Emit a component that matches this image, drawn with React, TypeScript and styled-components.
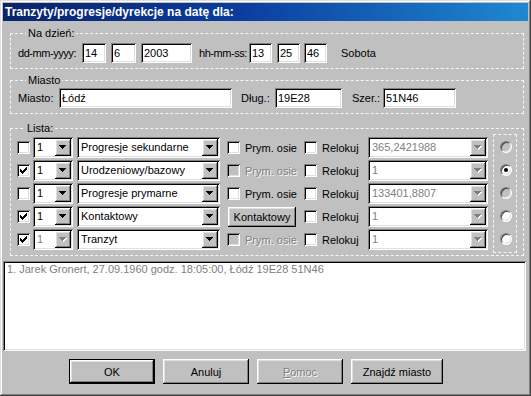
import React from "react"
import styled, { createGlobalStyle, css } from "styled-components"

const GlobalStyle = createGlobalStyle`
  html, body {
    margin: 0;
    padding: 0;
    background: #c0c0c0;
  }
  body {
    font-family: "Liberation Sans", Arial, sans-serif;
    font-size: 11px;
  }
`

const sunken = css`
  box-shadow: inset 1px 1px #808080, inset -1px -1px #ffffff,
    inset 2px 2px #000000, inset -2px -2px #dfdfdf;
`

const raised = css`
  box-shadow: inset -1px -1px #000000, inset 1px 1px #ffffff,
    inset -2px -2px #808080, inset 2px 2px #dfdfdf;
`

const disabledText = css`
  color: #808080;
  text-shadow: 1px 1px 0 #ffffff;
`

const Window = styled.div`
  box-sizing: border-box;
  width: 531px;
  height: 396px;
  padding: 3px;
  background: #c0c0c0;
  box-shadow: inset -1px -1px #404040, inset 1px 1px #dfdfdf,
    inset -2px -2px #808080, inset 2px 2px #ffffff;
  display: flex;
  flex-direction: column;
  overflow: hidden;
  color: #000;
`

const TitleBar = styled.div`
  height: 18px;
  flex-shrink: 0;
  padding-left: 2px;
  display: flex;
  align-items: center;
  background: linear-gradient(90deg, #0a246a 0%, #0b3d9e 45%, #1f88d2 100%);
  color: #fff;
  font-weight: bold;
  font-size: 12px;
  white-space: nowrap;
`

const Group = styled.fieldset<{ $top: number; $pt: number; $pb: number; $pl: number }>`
  margin: ${(p) => p.$top}px 4px 0 7px;
  padding: ${(p) => p.$pt}px 5px ${(p) => p.$pb}px ${(p) => p.$pl}px;
  border: 1px dashed #f6f6f6;
  min-width: 0;
`

const Caption = styled.legend`
  margin-left: 8px;
  padding: 0 2px;
  line-height: 12px;
  font-size: 11px;
`

const FieldRow = styled.div`
  display: flex;
  align-items: center;
  white-space: nowrap;
`

const Label = styled.span<{ $w?: number; $ml?: number; $disabled?: boolean; $tight?: boolean }>`
  display: inline-block;
  flex-shrink: 0;
  width: ${(p) => (p.$w ? `${p.$w}px` : "auto")};
  margin-left: ${(p) => p.$ml ?? 0}px;
  white-space: nowrap;
  letter-spacing: ${(p) => (p.$tight ? "-0.45px" : "normal")};
  ${(p) => p.$disabled && disabledText}
`

const TextBox = styled.div<{ $w: number; $ml?: number; $h?: number }>`
  box-sizing: border-box;
  flex-shrink: 0;
  width: ${(p) => p.$w}px;
  height: ${(p) => p.$h ?? 20}px;
  margin-left: ${(p) => p.$ml ?? 0}px;
  padding: 3px 3px 0;
  background: #fff;
  ${sunken}
  line-height: 14px;
  overflow: hidden;
`

const ComboBox = styled.div<{ $w: number }>`
  box-sizing: border-box;
  width: ${(p) => p.$w}px;
  height: 21px;
  padding: 2px;
  display: flex;
  background: #fff;
  ${sunken}
`

const ComboText = styled.span<{ $muted?: boolean }>`
  flex: 1;
  padding-left: 2px;
  line-height: 17px;
  overflow: hidden;
  white-space: nowrap;
  color: ${(p) => (p.$muted ? "#808080" : "#000")};
`

const DropButton = styled.span`
  width: 16px;
  height: 17px;
  display: flex;
  align-items: center;
  justify-content: center;
  background: #c0c0c0;
  ${raised}
`

const CheckFrame = styled.span<{ $disabled?: boolean }>`
  box-sizing: border-box;
  display: inline-flex;
  align-items: center;
  justify-content: center;
  width: 13px;
  height: 13px;
  flex-shrink: 0;
  background: ${(p) => (p.$disabled ? "#c0c0c0" : "#fff")};
  ${sunken}
`

const Cell = styled.div`
  display: flex;
  align-items: center;
`

const ListRow = styled.div`
  display: grid;
  grid-template-columns: 16px 44px 150px 77px 64px 120px;
  align-items: center;
  height: 21px;
`

const Rows = styled.div`
  display: flex;
  flex-direction: column;
  gap: 2px;
  padding-top: 3px;
`

const ListBody = styled.div`
  display: flex;
  align-items: flex-start;
`

const RadioFrame = styled.div`
  box-sizing: border-box;
  width: 24px;
  height: 119px;
  margin-left: 5px;
  padding-top: 6px;
  border: 1px dashed #f6f6f6;
  display: flex;
  flex-direction: column;
  align-items: center;
  gap: 11px;
`

const Radio = styled.span<{ $checked?: boolean; $grey?: boolean }>`
  position: relative;
  box-sizing: border-box;
  width: 12px;
  height: 12px;
  border-radius: 50%;
  border: 1px solid;
  border-color: #808080 #ffffff #ffffff #808080;
  background: ${(p) => (p.$grey ? "#c0c0c0" : "#fff")};
  box-shadow: inset 1px 1px #404040, inset -1px -1px #dfdfdf;
  margin-left: 1px;

  &::after {
    content: "";
    display: ${(p) => (p.$checked ? "block" : "none")};
    position: absolute;
    left: 3px;
    top: 3px;
    width: 4px;
    height: 4px;
    border-radius: 50%;
    background: #000;
  }
`

const PushButton = styled.button<{ $w: number; $h: number; $default?: boolean; $disabled?: boolean }>`
  box-sizing: border-box;
  width: ${(p) => p.$w}px;
  height: ${(p) => p.$h}px;
  padding: 0;
  border: ${(p) => (p.$default ? "1px solid #000" : "none")};
  background: #c0c0c0;
  ${raised}
  font-family: "Liberation Sans", Arial, sans-serif;
  font-size: 11px;
  color: #000;
  ${(p) => p.$disabled && disabledText}
  u {
    text-decoration: underline;
  }
`

const Memo = styled.div`
  box-sizing: border-box;
  height: 90px;
  margin: 5px 2px 0 0;
  padding: 2px 4px;
  background: #fff;
  ${sunken}
  color: #808080;
  line-height: 13px;
`

const ButtonBar = styled.div`
  display: flex;
  gap: 8px;
  margin-top: 8px;
  padding-left: 66px;
`

const Arrow: React.FC<{ disabled?: boolean }> = ({ disabled }) => {
  const d = "M0 0h7v1H0zM1 1h5v1H1zM2 2h3v1H2zM3 3h1v1H3z"
  return (
    <svg width="8" height="5" viewBox="0 0 8 5" shapeRendering="crispEdges">
      {disabled && <path d={d} fill="#fff" transform="translate(1 1)" />}
      <path d={d} fill={disabled ? "#808080" : "#000"} />
    </svg>
  )
}

const CheckBox: React.FC<{ checked?: boolean; disabled?: boolean }> = ({ checked, disabled }) => (
  <CheckFrame $disabled={disabled}>
    {checked && (
      <svg width="7" height="7" viewBox="0 0 7 7" shapeRendering="crispEdges">
        <path
          d="M6 0h1v1H6zM5 1h2v1H5zM0 2h1v1H0zM4 2h3v1H4zM0 3h2v1H0zM3 3h3v1H3zM0 4h5v1H0zM1 5h3v1H1zM2 6h1v1H2z"
          fill="#000"
        />
      </svg>
    )}
  </CheckFrame>
)

const Combo: React.FC<{ w: number; text: string; muted?: boolean; arrowDisabled?: boolean }> = ({
  w,
  text,
  muted,
  arrowDisabled,
}) => (
  <ComboBox $w={w}>
    <ComboText $muted={muted}>{text}</ComboText>
    <DropButton>
      <Arrow disabled={arrowDisabled} />
    </DropButton>
  </ComboBox>
)

interface RowData {
  on: boolean
  numDisabled?: boolean
  kind: string
  prym: "on" | "off" | "button"
  value: string
  radio: "grey" | "white" | "checked"
}

const rows: RowData[] = [
  { on: false, kind: "Progresje sekundarne", prym: "on", value: "365,2421988", radio: "grey" },
  { on: true, kind: "Urodzeniowy/bazowy", prym: "off", value: "1", radio: "checked" },
  { on: false, kind: "Progresje prymarne", prym: "on", value: "133401,8807", radio: "grey" },
  { on: true, kind: "Kontaktowy", prym: "button", value: "1", radio: "white" },
  { on: true, numDisabled: true, kind: "Tranzyt", prym: "off", value: "1", radio: "white" },
]

const App: React.FC = () => {
  return (
    <>
      <GlobalStyle />
      <Window>
        <TitleBar>Tranzyty/progresje/dyrekcje na datę dla:</TitleBar>

        <Group $top={6} $pt={4} $pb={5} $pl={7}>
          <Caption>Na dzień:</Caption>
          <FieldRow>
            <Label $w={64} $tight>dd-mm-yyyy:</Label>
            <TextBox $w={24}>14</TextBox>
            <TextBox $w={25} $ml={5}>6</TextBox>
            <TextBox $w={51} $ml={5}>2003</TextBox>
            <Label $w={50} $ml={7} $tight>hh-mm-ss:</Label>
            <TextBox $w={23}>13</TextBox>
            <TextBox $w={23} $ml={5}>25</TextBox>
            <TextBox $w={23} $ml={4}>46</TextBox>
            <Label $ml={14}>Sobota</Label>
          </FieldRow>
        </Group>

        <Group $top={5} $pt={2} $pb={5} $pl={7}>
          <Caption>Miasto</Caption>
          <FieldRow>
            <Label $w={41}>Miasto:</Label>
            <TextBox $w={173}>Łódź</TextBox>
            <Label $w={34} $ml={9}>Dług.:</Label>
            <TextBox $w={67}>19E28</TextBox>
            <Label $w={31} $ml={10}>Szer.:</Label>
            <TextBox $w={73}>51N46</TextBox>
          </FieldRow>
        </Group>

        <Group $top={8} $pt={0} $pb={2} $pl={6}>
          <Caption>Lista:</Caption>
          <ListBody>
            <Rows>
              {rows.map((r, i) => (
                <ListRow key={i}>
                  <CheckBox checked={r.on} />
                  <ComboBox $w={40}>
                    <ComboText $muted={r.numDisabled}>1</ComboText>
                    <DropButton>
                      <Arrow disabled={r.numDisabled} />
                    </DropButton>
                  </ComboBox>
                  <Combo w={143} text={r.kind} />
                  <Cell>
                    {r.prym === "button" ? (
                      <PushButton $w={68} $h={20} style={{ marginLeft: 1 }}>
                        Kontaktowy
                      </PushButton>
                    ) : (
                      <>
                        <CheckBox disabled={r.prym === "off"} />
                        <Label $ml={5} $disabled={r.prym === "off"}>
                          Prym. osie
                        </Label>
                      </>
                    )}
                  </Cell>
                  <Cell>
                    <CheckBox />
                    <Label $ml={5}>Relokuj</Label>
                  </Cell>
                  <Combo w={120} text={r.value} muted arrowDisabled />
                </ListRow>
              ))}
            </Rows>
            <RadioFrame>
              {rows.map((r, i) => (
                <Radio key={i} $checked={r.radio === "checked"} $grey={r.radio === "grey"} />
              ))}
            </RadioFrame>
          </ListBody>
        </Group>

        <Memo>1. Jarek Gronert, 27.09.1960 godz. 18:05:00, Łódź 19E28 51N46</Memo>

        <ButtonBar>
          <PushButton $w={86} $h={25} $default>
            OK
          </PushButton>
          <PushButton $w={86} $h={25}>
            Anuluj
          </PushButton>
          <PushButton $w={86} $h={25} $disabled>
            <u>P</u>omoc
          </PushButton>
          <PushButton $w={92} $h={25}>
            Znajdź miasto
          </PushButton>
        </ButtonBar>
      </Window>
    </>
  )
}

export default App
